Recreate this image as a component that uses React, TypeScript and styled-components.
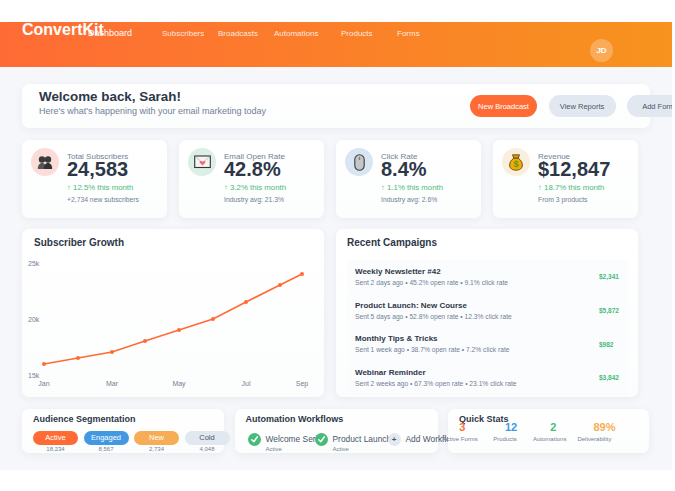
import React from 'react';
import styled, { createGlobalStyle } from 'styled-components';

const GlobalStyle = createGlobalStyle`
  html, body {
    margin: 0;
    padding: 0;
    background: #fff;
    font-family: "Liberation Sans", Arial, sans-serif;
    color: #2d3748;
  }
  * {
    box-sizing: border-box;
  }
`;

const Page = styled.div`
  width: 672px;
  margin-top: 22px;
  overflow: hidden;
  background: #f5f7fa;
`;

const Header = styled.header`
  height: 45px;
  padding-left: 22px;
  display: flex;
  align-items: flex-start;
  background: linear-gradient(90deg, #ff6b35, #f7931e);
  color: #fff;
`;

const Logo = styled.div`
  position: relative;
  z-index: 1;
  width: 66px;
  flex: none;
  font-size: 16px;
  line-height: 16px;
  font-weight: 700;
  white-space: nowrap;
`;

const Nav = styled.nav`
  display: grid;
  grid-template-columns: 74px 56px 56px 67px 56px auto;
  align-items: center;
  height: 22px;
`;

const NavItem = styled.a<{ $active?: boolean }>`
  font-size: ${p => (p.$active ? 9 : 8)}px;
  color: ${p => (p.$active ? '#fff' : 'rgba(255, 255, 255, 0.85)')};
  white-space: nowrap;
`;

const Avatar = styled.div`
  width: 23px;
  height: 23px;
  margin: auto 59px 5px auto;
  border-radius: 50%;
  background: rgba(255, 255, 255, 0.25);
  display: flex;
  align-items: center;
  justify-content: center;
  font-size: 8px;
  font-weight: 700;
`;

const Main = styled.main`
  padding: 17px 0 17px 22px;
  display: flex;
  flex-direction: column;
`;

const Card = styled.section`
  background: linear-gradient(180deg, #fff, #fcfdfd);
  border-radius: 7px;
  box-shadow: 0 2px 8px rgba(45, 55, 72, 0.06);
`;

const WelcomeCard = styled(Card)`
  width: 628px;
  height: 44px;
  padding-left: 17px;
  display: flex;
  align-items: center;
`;

const WelcomeText = styled.div`
  width: 431px;
  flex: none;
  padding-bottom: 6px;
`;

const WelcomeTitle = styled.h1`
  margin: 0 0 2px;
  font-size: 13.4px;
  line-height: 15px;
  font-weight: 700;
`;

const WelcomeSub = styled.p`
  margin: 0;
  font-size: 9px;
  line-height: 11px;
  color: #718096;
`;

const Actions = styled.div`
  display: flex;
  gap: 11.5px;
  flex: none;
`;

const ActionButton = styled.button<{ $primary?: boolean }>`
  width: 67px;
  height: 22px;
  padding: 0;
  border: none;
  border-radius: 11px;
  font-family: inherit;
  font-size: 7.5px;
  white-space: nowrap;
  background: ${p => (p.$primary ? '#ff6b35' : '#e2e8f0')};
  color: ${p => (p.$primary ? '#fff' : '#4a5568')};
`;

const StatGrid = styled.div`
  margin-top: 12px;
  display: grid;
  grid-template-columns: repeat(4, 145px);
  gap: 12px;
`;

const StatCard = styled(Card)`
  height: 78px;
  padding: 8px 9px;
  display: flex;
  gap: 8px;
`;

const IconCircle = styled.div<{ $bg: string }>`
  width: 28px;
  height: 28px;
  flex: none;
  border-radius: 50%;
  background: ${p => p.$bg};
  display: flex;
  align-items: center;
  justify-content: center;
`;

const StatBody = styled.div`
  display: flex;
  flex-direction: column;
`;

const StatLabel = styled.div`
  font-size: 8px;
  line-height: 9px;
  margin-top: 4px;
  color: #718096;
`;

const StatValue = styled.div`
  font-size: 20px;
  line-height: 20px;
  font-weight: 700;
  margin-top: -2px;
`;

const StatTrend = styled.div`
  font-size: 7.8px;
  line-height: 10px;
  margin-top: 4px;
  color: #48bb78;
`;

const StatNote = styled.div`
  font-size: 6.8px;
  line-height: 9px;
  margin-top: 1.5px;
  color: #718096;
`;

const MiddleGrid = styled.div`
  margin-top: 11px;
  display: grid;
  grid-template-columns: 302px 302px;
  gap: 12px;
`;

const PanelTitle = styled.h3`
  margin: 0;
  font-size: 10px;
  line-height: 13px;
  font-weight: 700;
`;

const SmallTitle = styled(PanelTitle)`
  font-size: 9px;
`;

const ChartCard = styled(Card)`
  height: 168px;
  padding-top: 7px;

  ${PanelTitle} {
    padding-left: 12px;
  }
`;

const ChartSvg = styled.svg`
  display: block;
  margin-top: 7px;

  text {
    font-family: "Liberation Sans", Arial, sans-serif;
    font-size: 7px;
    fill: #718096;
  }
`;

const CampaignCard = styled(Card)`
  height: 168px;
  padding: 7px 10px 0 11px;
`;

const CampaignList = styled.div`
  margin-top: 11px;
  display: flex;
  flex-direction: column;
`;

const CampaignRow = styled.div`
  height: 33.7px;
  padding: 0 8px;
  display: flex;
  align-items: center;
  justify-content: space-between;
  background: #fbfcfd;
  border-radius: 4px;
`;

const CampaignName = styled.div`
  font-size: 8px;
  line-height: 10px;
  font-weight: 700;
`;

const CampaignMeta = styled.div`
  font-size: 6.7px;
  line-height: 9px;
  margin-top: 1px;
  color: #718096;
  white-space: nowrap;
`;

const CampaignValue = styled.div`
  width: 21px;
  font-size: 6.5px;
  font-weight: 700;
  color: #48bb78;
`;

const BottomGrid = styled.div`
  margin-top: 12px;
  display: grid;
  grid-template-columns: 202px 203px 201px;
  column-gap: 10.5px;
`;

const BottomCard = styled(Card)`
  height: 44px;
  padding: 4px 11px 0;
`;

const SegmentRow = styled.div`
  margin-top: 5px;
  display: flex;
  gap: 5.5px;
`;

const Segment = styled.div`
  width: 45px;
  flex: none;
  text-align: center;
`;

const SegmentPill = styled.div<{ $bg: string; $fg: string }>`
  height: 14px;
  border-radius: 7px;
  background: ${p => p.$bg};
  color: ${p => p.$fg};
  font-size: 7.5px;
  line-height: 14px;
`;

const SegmentCount = styled.div`
  font-size: 6px;
  line-height: 8px;
  color: #718096;
`;

const WorkflowRow = styled.div`
  margin-top: 7px;
  margin-left: 2px;
  display: grid;
  grid-template-columns: 67px 73px auto;
`;

const Workflow = styled.div`
  display: flex;
  gap: 5px;
  min-width: 0;
`;

const WorkflowIcon = styled.div<{ $done?: boolean }>`
  position: relative;
  z-index: 1;
  width: 13px;
  height: 13px;
  flex: none;
  border-radius: 50%;
  background: ${p => (p.$done ? '#48bb78' : '#e2e8f0')};
  color: #4a5568;
  display: flex;
  align-items: center;
  justify-content: center;
  font-size: 8px;
  font-weight: 700;
`;

const WorkflowText = styled.div`
  white-space: nowrap;
`;

const WorkflowName = styled.div`
  font-size: 8.4px;
  line-height: 12px;
  color: #4a5568;
`;

const WorkflowStatus = styled.div`
  font-size: 6px;
  line-height: 8px;
  color: #718096;
`;

const QuickCard = styled(BottomCard)`
  position: relative;
`;

const QuickGrid = styled.div`
  margin: -5px 0 0 -21px;
  display: grid;
  grid-template-columns: repeat(4, 44.7px);
`;

const QuickItem = styled.div`
  display: flex;
  flex-direction: column;
  align-items: center;
  white-space: nowrap;
`;

const QuickValue = styled.div<{ $color: string; $shift: number }>`
  margin-left: ${p => p.$shift}px;
  font-size: 11px;
  line-height: 13px;
  font-weight: 700;
  color: ${p => p.$color};
`;

const QuickLabel = styled.div`
  margin-top: 1px;
  font-size: 6px;
  line-height: 8px;
  color: #718096;
`;

const PeopleIcon = () => (
  <svg width="16" height="15" viewBox="0 0 16 15">
    <circle cx="5" cy="4.5" r="3.2" fill="#3a3a3a" />
    <circle cx="11" cy="4.5" r="3.2" fill="#3a3a3a" />
    <path d="M.8 14c0-3.6 1.6-6 4.2-6s4.2 2.4 4.2 6z" fill="#555" />
    <path d="M6.8 14c0-3.6 1.6-6 4.2-6s4.2 2.4 4.2 6z" fill="#333" />
  </svg>
);

const LetterIcon = () => (
  <svg width="17" height="14" viewBox="0 0 17 14">
    <rect x=".7" y="1" width="15.6" height="11.5" fill="#f7f3f3" stroke="#333" strokeWidth="1.1" />
    <path d="M1 1.5l7.5 6 7.5-6" fill="none" stroke="#b9aeae" strokeWidth=".7" />
    <path d="M8.5 10.5L5.8 7.8c-1-1.2.9-2.7 2.7-1 1.8-1.7 3.7-.2 2.7 1z" fill="#ee6a78" />
  </svg>
);

const MouseIcon = () => (
  <svg width="11" height="17" viewBox="0 0 11 17">
    <rect x=".8" y=".8" width="9.4" height="15.4" rx="4.7" fill="#c4c6c8" stroke="#3d3d3d" strokeWidth="1.1" />
    <rect x="4.8" y="3" width="1.4" height="3" rx=".7" fill="#777" />
  </svg>
);

const BagIcon = () => (
  <svg width="14" height="17" viewBox="0 0 14 17">
    <path d="M3.5 .8h7L9.2 4.2H4.8z" fill="#e59a0c" stroke="#4d3a10" strokeWidth=".8" />
    <path d="M4.8 4.2h4.4C12 6 13.4 8.6 13.4 11c0 3.4-2.6 5.2-6.4 5.2S.6 14.4.6 11c0-2.4 1.4-5 4.2-6.8z" fill="#f2a900" stroke="#4d3a10" strokeWidth=".8" />
    <text x="7" y="13.4" textAnchor="middle" fontSize="9" fontWeight="700" fontFamily="Liberation Sans" fill="#4f9a2a">$</text>
  </svg>
);

const CheckIcon = () => (
  <svg width="9" height="9" viewBox="0 0 9 9">
    <path d="M1.8 4.8l2 2 3.6-5" fill="none" stroke="#fff" strokeWidth="1.5" strokeLinecap="round" strokeLinejoin="round" />
  </svg>
);

const navItems = ['Subscribers', 'Broadcasts', 'Automations', 'Products', 'Forms'];

const stats = [
  { label: 'Total Subscribers', value: '24,583', trend: '↑ 12.5% this month', note: '+2,734 new subscribers', bg: '#fbdcd8', icon: <PeopleIcon /> },
  { label: 'Email Open Rate', value: '42.8%', trend: '↑ 3.2% this month', note: 'Industry avg: 21.3%', bg: '#dcefe6', icon: <LetterIcon /> },
  { label: 'Click Rate', value: '8.4%', trend: '↑ 1.1% this month', note: 'Industry avg: 2.6%', bg: '#d8e6f3', icon: <MouseIcon /> },
  { label: 'Revenue', value: '$12,847', trend: '↑ 18.7% this month', note: 'From 3 products', bg: '#f9efdc', icon: <BagIcon /> },
];

const chartPoints = [
  [22, 108], [56, 102], [90, 96], [123, 85], [157, 74], [191, 63], [224, 46], [258, 29], [280, 18],
];

const campaigns = [
  { name: 'Weekly Newsletter #42', meta: 'Sent 2 days ago • 45.2% open rate • 9.1% click rate', value: '$2,341' },
  { name: 'Product Launch: New Course', meta: 'Sent 5 days ago • 52.8% open rate • 12.3% click rate', value: '$5,872' },
  { name: 'Monthly Tips & Tricks', meta: 'Sent 1 week ago • 38.7% open rate • 7.2% click rate', value: '$982' },
  { name: 'Webinar Reminder', meta: 'Sent 2 weeks ago • 67.3% open rate • 23.1% click rate', value: '$3,842' },
];

const segments = [
  { label: 'Active', count: '18,234', bg: '#ff6b35', fg: '#fff' },
  { label: 'Engaged', count: '8,567', bg: '#4299e1', fg: '#fff' },
  { label: 'New', count: '2,734', bg: '#f6ad55', fg: '#fff' },
  { label: 'Cold', count: '4,048', bg: '#e2e8f0', fg: '#4a5568' },
];

const quickStats = [
  { value: '3', label: 'Active Forms', color: '#ff6b35', shift: 4 },
  { value: '12', label: 'Products', color: '#4299e1', shift: 12 },
  { value: '2', label: 'Automations', color: '#48bb78', shift: 7 },
  { value: '89%', label: 'Deliverability', color: '#f6ad55', shift: 20 },
];

const App: React.FC = () => (
  <>
    <GlobalStyle />
    <Page>
      <Header>
        <Logo>ConvertKit</Logo>
        <Nav>
          <NavItem $active>Dashboard</NavItem>
          {navItems.map(item => (
            <NavItem key={item}>{item}</NavItem>
          ))}
        </Nav>
        <Avatar>JD</Avatar>
      </Header>
      <Main>
        <WelcomeCard>
          <WelcomeText>
            <WelcomeTitle>Welcome back, Sarah!</WelcomeTitle>
            <WelcomeSub>Here's what's happening with your email marketing today</WelcomeSub>
          </WelcomeText>
          <Actions>
            <ActionButton $primary>New Broadcast</ActionButton>
            <ActionButton>View Reports</ActionButton>
            <ActionButton>Add Forms</ActionButton>
          </Actions>
        </WelcomeCard>

        <StatGrid>
          {stats.map(stat => (
            <StatCard key={stat.label}>
              <IconCircle $bg={stat.bg}>{stat.icon}</IconCircle>
              <StatBody>
                <StatLabel>{stat.label}</StatLabel>
                <StatValue>{stat.value}</StatValue>
                <StatTrend>{stat.trend}</StatTrend>
                <StatNote>{stat.note}</StatNote>
              </StatBody>
            </StatCard>
          ))}
        </StatGrid>

        <MiddleGrid>
          <ChartCard>
            <PanelTitle>Subscriber Growth</PanelTitle>
            <ChartSvg width="302" height="141" viewBox="0 0 302 141">
              <text x="6" y="9.5">25k</text>
              <text x="6" y="65.5">20k</text>
              <text x="6" y="121.5">15k</text>
              <text x="22" y="130" textAnchor="middle">Jan</text>
              <text x="90" y="130" textAnchor="middle">Mar</text>
              <text x="157" y="130" textAnchor="middle">May</text>
              <text x="224" y="130" textAnchor="middle">Jul</text>
              <text x="280" y="130" textAnchor="middle">Sep</text>
              <polyline
                points={chartPoints.map(p => p.join(',')).join(' ')}
                fill="none"
                stroke="#ff6b35"
                strokeWidth="1.6"
              />
              {chartPoints.map(([x, y]) => (
                <circle key={x} cx={x} cy={y} r="2" fill="#ff6b35" />
              ))}
            </ChartSvg>
          </ChartCard>

          <CampaignCard>
            <PanelTitle>Recent Campaigns</PanelTitle>
            <CampaignList>
              {campaigns.map(c => (
                <CampaignRow key={c.name}>
                  <div>
                    <CampaignName>{c.name}</CampaignName>
                    <CampaignMeta>{c.meta}</CampaignMeta>
                  </div>
                  <CampaignValue>{c.value}</CampaignValue>
                </CampaignRow>
              ))}
            </CampaignList>
          </CampaignCard>
        </MiddleGrid>

        <BottomGrid>
          <BottomCard>
            <SmallTitle>Audience Segmentation</SmallTitle>
            <SegmentRow>
              {segments.map(s => (
                <Segment key={s.label}>
                  <SegmentPill $bg={s.bg} $fg={s.fg}>{s.label}</SegmentPill>
                  <SegmentCount>{s.count}</SegmentCount>
                </Segment>
              ))}
            </SegmentRow>
          </BottomCard>

          <BottomCard>
            <SmallTitle>Automation Workflows</SmallTitle>
            <WorkflowRow>
              <Workflow>
                <WorkflowIcon $done><CheckIcon /></WorkflowIcon>
                <WorkflowText>
                  <WorkflowName>Welcome Series</WorkflowName>
                  <WorkflowStatus>Active</WorkflowStatus>
                </WorkflowText>
              </Workflow>
              <Workflow>
                <WorkflowIcon $done><CheckIcon /></WorkflowIcon>
                <WorkflowText>
                  <WorkflowName>Product Launch</WorkflowName>
                  <WorkflowStatus>Active</WorkflowStatus>
                </WorkflowText>
              </Workflow>
              <Workflow>
                <WorkflowIcon>+</WorkflowIcon>
                <WorkflowText>
                  <WorkflowName>Add Workflow</WorkflowName>
                </WorkflowText>
              </Workflow>
            </WorkflowRow>
          </BottomCard>

          <QuickCard>
            <SmallTitle>Quick Stats</SmallTitle>
            <QuickGrid>
              {quickStats.map(q => (
                <QuickItem key={q.label}>
                  <QuickValue $color={q.color} $shift={q.shift}>{q.value}</QuickValue>
                  <QuickLabel>{q.label}</QuickLabel>
                </QuickItem>
              ))}
            </QuickGrid>
          </QuickCard>
        </BottomGrid>
      </Main>
    </Page>
  </>
);

export default App;
